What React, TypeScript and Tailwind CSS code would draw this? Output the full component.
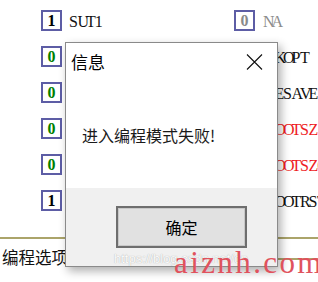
const rows = [
  { l: '1', lLabel: 'SUT1', r: '0', rLabel: 'NA', rTone: 'gray' },
  { l: '0', lLabel: 'SUT0', r: '0', rLabel: 'CKOPT', rTone: 'black' },
  { l: '0', lLabel: 'CKSEL3', r: '0', rLabel: 'EESAVE', rTone: 'black' },
  { l: '0', lLabel: 'CKSEL2', r: '0', rLabel: 'BOOTSZ1', rTone: 'red' },
  { l: '0', lLabel: 'CKSEL1', r: '0', rLabel: 'BOOTSZ0', rTone: 'red' },
  { l: '1', lLabel: 'CKSEL0', r: '1', rLabel: 'BOOTRST', rTone: 'black' },
];

function Bit({ v, gray }: { v: string; gray?: boolean }) {
  const color = gray ? 'text-[#8a8a8a]' : v === '1' ? 'text-black' : 'text-[#008000]';
  return (
    <div className="w-[21px] h-[21px] shrink-0 border-2 border-[#5d5da5] bg-white flex items-center justify-center">
      <span className={`font-['Liberation_Serif',serif] font-bold text-[16px] leading-none ${color}`}>{v}</span>
    </div>
  );
}

// fixed-pitch serif label, like the SimSun-style fuse names
function Label({ text, tone }: { text: string; tone: string }) {
  const color = tone === 'gray' ? 'text-[#8c8c8c]' : tone === 'red' ? 'text-[#ee1c24]' : 'text-[#111]';
  return (
    <span className={`flex shrink-0 font-['Liberation_Serif',serif] text-[16px] leading-[21px] pt-[2px] whitespace-nowrap ${color}`}>
      {text.split('').map((c, i) => (
        <span key={i} className="inline-block w-[8.5px] text-center">
          {c}
        </span>
      ))}
    </span>
  );
}

export default function App() {
  return (
    <div className="relative w-[318px] h-[282px] bg-white overflow-hidden">
      <div className="pl-[41px] pt-[9px]">
        {rows.map((row, i) => (
          <div key={i} className="h-[36px] flex items-start">
            <div className="w-[193px] shrink-0 flex items-center gap-[7px]">
              <Bit v={row.l} />
              <Label text={row.lLabel} tone="black" />
            </div>
            <div className={`shrink-0 flex items-center ${i === 0 ? 'gap-[8px]' : 'gap-[11px]'}`}>
              <Bit v={row.r} gray={i === 0} />
              <Label text={row.rLabel} tone={row.rTone} />
            </div>
          </div>
        ))}
      </div>

      <div className="mt-[12px] h-[2px] bg-[#aba46a]" />

      <div className="flex items-start">
        <div className="pl-[2px] mt-[7px] font-['Noto_Sans_CJK_SC',sans-serif] text-[16.5px] leading-[22px] text-[#111] whitespace-nowrap">
          编程选项卡
        </div>
        <div className="flex-1 mt-[19px] h-[2px] bg-[#aba46a]" />
      </div>

      {/* message box */}
      <div className="absolute left-[65px] top-[42px] w-[213px] h-[225px] border border-[#8a8a8a] bg-white flex flex-col shadow-[3px_4px_9px_rgba(0,0,0,0.32)]">
        <div className="h-[36px] shrink-0 flex items-center justify-between pl-[5px] pr-[14px]">
          <span className="font-['Noto_Sans_CJK_SC',sans-serif] text-[17px] leading-none text-black">信息</span>
          <svg width="17" height="16" viewBox="0 0 17 16" className="mt-[1px]">
            <path d="M1 0.5 L16 15.5 M16 0.5 L1 15.5" stroke="#111" strokeWidth="1.1" fill="none" />
          </svg>
        </div>
        <div className="flex-1 pl-[16px] pt-[45px]">
          <p className="font-['Noto_Sans_CJK_SC',sans-serif] text-[16px] leading-[22px] text-[#1a1a1a]">进入编程模式失败!</p>
        </div>
        <div className="h-[78px] shrink-0 bg-[#f0f0f0] flex items-center justify-end pr-[30px]">
          <div className="w-[131px] h-[42px] border-2 border-[#6e6e6e] bg-[#e1e1e1] shadow-[inset_0_0_0_1px_#c8c8c8] flex items-center justify-center">
            <span className="font-['Noto_Sans_CJK_SC',sans-serif] text-[16px] leading-none text-black">确定</span>
          </div>
        </div>
      </div>

      {/* watermarks */}
      <div className="absolute left-[114px] top-[252px] font-['Liberation_Sans',sans-serif] text-[13px] leading-none text-[#fbfbfb] [text-shadow:0_0_1px_#9c9c9c] whitespace-nowrap">
        https://blog.csdn.net/cp
      </div>
      <div className="absolute left-[174px] top-[247px] font-['Liberation_Serif',serif] text-[31px] leading-none tracking-[2.4px] text-[#e0525d] whitespace-nowrap">
        aiznh.com
      </div>
    </div>
  );
}
